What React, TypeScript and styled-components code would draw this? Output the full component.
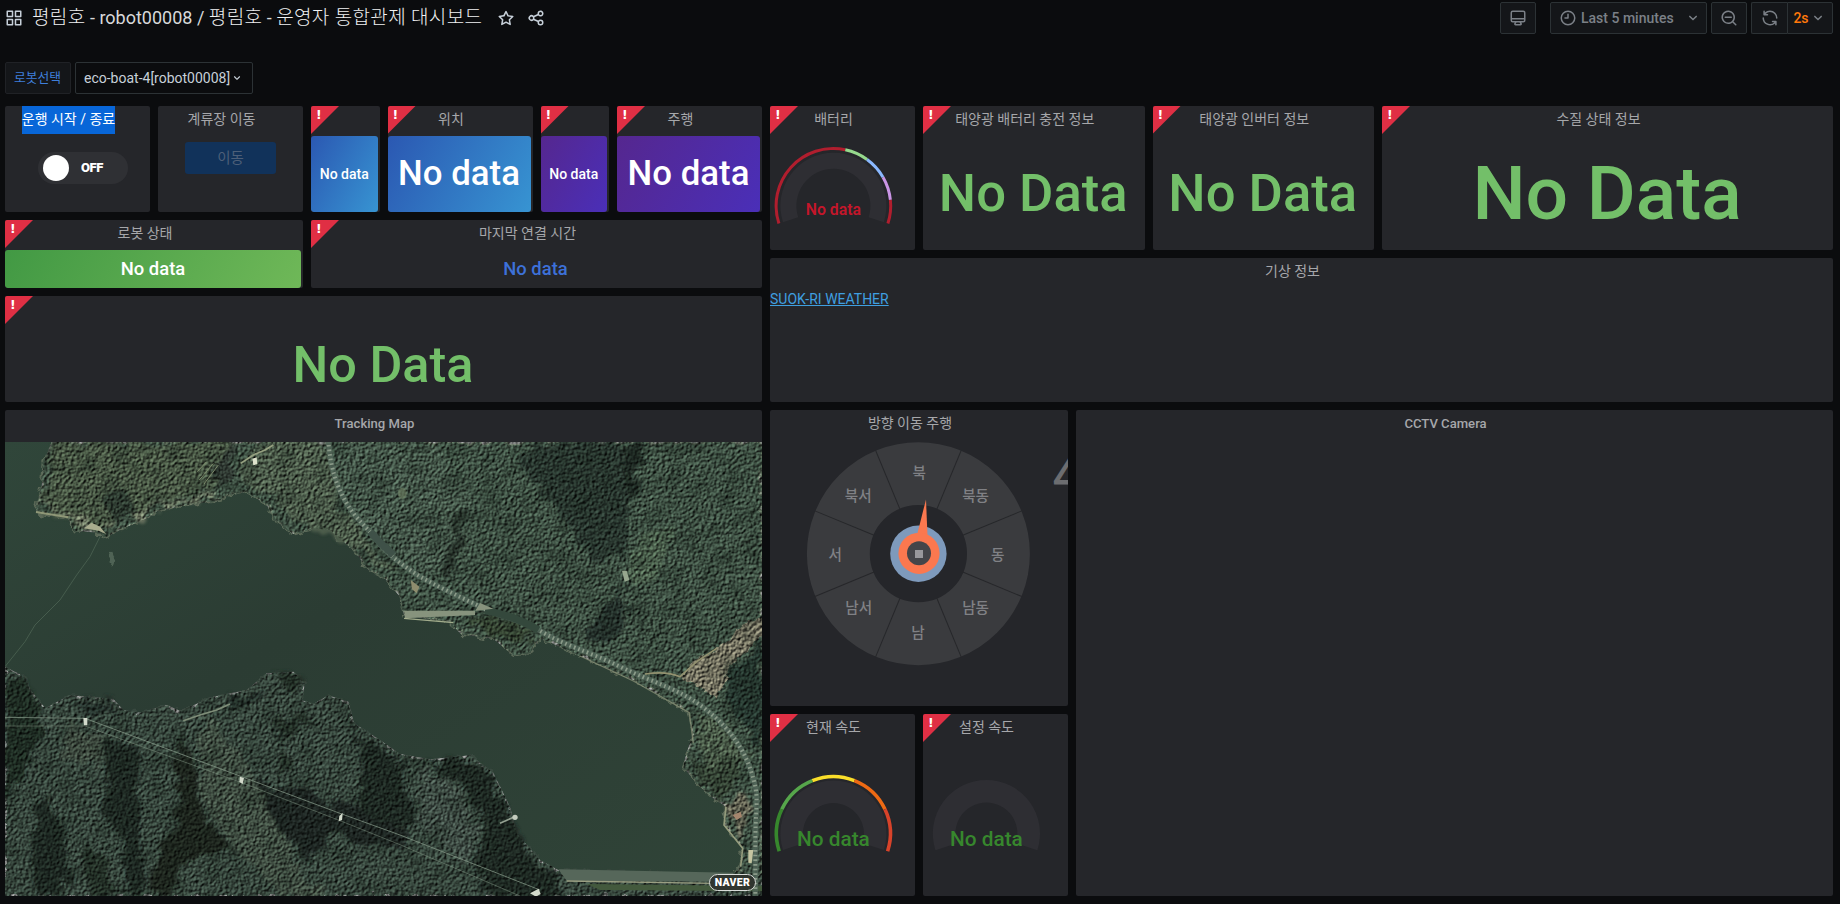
import React from "react";
import styled, { createGlobalStyle } from "styled-components";

const SANS = `Roboto, "Noto Sans CJK KR", sans-serif`;

const GlobalStyle = createGlobalStyle`
  *, *::before, *::after { box-sizing: border-box; }
  body { margin: 0; background: #0b0c0e; color: #c7d0d9; font-family: ${SANS}; font-size: 14px; overflow: hidden; }
`;

const Page = styled.div`
  width: 1840px;
  height: 904px;
  padding: 0 7px 0 5px;
  display: flex;
  flex-direction: column;
  background: #0b0c0e;
`;

const TopBar = styled.header`
  display: flex;
  align-items: center;
  justify-content: space-between;
  height: 36px;
  flex: none;
`;

const Heading = styled.div`
  display: flex;
  align-items: center;
  color: #c7d0d9;
`;

const Title = styled.h1`
  width: 452px;
  margin: 0 13px 0 9px;
  font-size: 18px;
  font-weight: 400;
  line-height: 34px;
  white-space: nowrap;
  color: #d8d9da;
`;

const Hangul = styled.span`
  font-size: 19px;
  font-weight: 300;
  letter-spacing: 0.35px;
  color: #f0f1f2;
`;

const TitleIcon = styled.span`
  display: flex;
  width: 18px;
  height: 18px;
  margin-right: 12px;
`;

const Tools = styled.div`
  display: flex;
  align-items: center;
  gap: 4px;
`;

const ToolButton = styled.button<{ $w: number; $gap?: number }>`
  display: flex;
  align-items: center;
  justify-content: center;
  width: ${(p) => p.$w}px;
  height: 32px;
  margin: 0 ${(p) => p.$gap ?? 0}px 0 0;
  padding: 0;
  border: 1px solid #2c3235;
  border-radius: 2px;
  background: #141619;
  color: #7b8087;
  font: 500 14px ${SANS};
`;

const RangeButton = styled(ToolButton)`
  justify-content: flex-start;
  padding: 0 4px 0 8px;
  gap: 4px;
  & > svg:last-child { margin-left: auto; }
`;

const RefreshGroup = styled.div`
  display: flex;
  & > button:first-child { border-right: 0; border-radius: 2px 0 0 2px; }
  & > button:last-child { border-radius: 0 2px 2px 0; }
`;

const IntervalLabel = styled.span`
  color: #ff780a;
`;

const Variables = styled.div`
  display: flex;
  gap: 4px;
  margin-top: 26px;
  height: 32px;
  flex: none;
`;

const VarLabel = styled.label`
  display: flex;
  align-items: center;
  justify-content: center;
  width: 66px;
  border: 1px solid #202226;
  border-radius: 2px;
  background: #141619;
  color: #3f7fdb;
  font-size: 12.8px;
  padding: 0 1px 3px 0;
`;

const VarSelect = styled.div`
  display: flex;
  align-items: center;
  width: 178px;
  padding: 0 8px;
  border: 1px solid #2c3235;
  border-radius: 2px;
  color: #c7d0d9;
  font-size: 14px;
  white-space: nowrap;
`;

const Grid = styled.main`
  display: grid;
  grid-template-columns: repeat(24, 1fr);
  grid-template-rows: repeat(21, 30px);
  gap: 8px;
  margin-top: 12px;
`;

const PanelBox = styled.section<{ $x: number; $y: number; $w: number; $h: number }>`
  position: relative;
  display: flex;
  flex-direction: column;
  min-width: 0;
  grid-column: ${(p) => p.$x} / span ${(p) => p.$w};
  grid-row: ${(p) => p.$y} / span ${(p) => p.$h};
  overflow: hidden;
  border-radius: 2px;
  background: #25262a;
`;

const PanelHeader = styled.header`
  display: flex;
  justify-content: center;
  flex: none;
  height: 28px;
  padding-right: 18px;
`;

const PanelTitle = styled.h2<{ $latin?: boolean; $selected?: boolean }>`
  margin: 0;
  height: 28px;
  line-height: ${(p) => (p.$latin ? 28 : 26)}px;
  font-size: ${(p) => (p.$latin ? 13.1 : 14)}px;
  font-weight: ${(p) => (p.$latin ? 500 : 400)};
  white-space: nowrap;
  color: ${(p) => (p.$selected ? "#ffffff" : "#a6a7aa")};
  background: ${(p) => (p.$selected ? "#0866d8" : "transparent")};
`;

const ErrorCorner = styled.div`
  position: absolute;
  top: 0;
  left: 0;
  width: 28px;
  height: 28px;
  padding-left: 5px;
  clip-path: polygon(0 0, 100% 0, 0 100%);
  background: #e02f44;
  color: #fff;
  font: 700 12.5px/18px "DejaVu Sans", sans-serif;
`;

const Body = styled.div<{ $pull?: number }>`
  display: flex;
  flex: 1;
  min-height: 0;
  align-items: center;
  justify-content: center;
  padding-bottom: ${(p) => p.$pull ?? 0}px;
`;

const Tile = styled.div<{ $bg: string; $size: number }>`
  display: flex;
  flex: 1;
  align-items: center;
  justify-content: center;
  margin: 2px 2px 0 0;
  padding-bottom: ${(p) => (p.$size > 30 ? 2 : 0)}px;
  border-radius: 3px;
  background: ${(p) => p.$bg};
  color: #fff;
  font-size: ${(p) => p.$size}px;
  font-weight: 500;
  line-height: 1;
  white-space: nowrap;
`;

const BlueValue = styled.span`
  color: #3d71d9;
  font-size: 18.4px;
  font-weight: 500;
  margin: 1px 2px 0 0;
`;

const BigValue = styled.span<{ $size: number; $drop: number }>`
  color: #73bf69;
  font-size: ${(p) => p.$size}px;
  font-weight: 500;
  line-height: 1;
  margin: ${(p) => p.$drop}px 1px 0 0;
  white-space: nowrap;
`;

const Switch = styled.div`
  display: flex;
  align-items: center;
  width: 90px;
  height: 32px;
  margin: 0 0 11px 11px;
  padding-left: 5px;
  border-radius: 16px;
  background: #2f3034;
  color: #fff;
  font: 900 13px ${SANS};
  letter-spacing: -0.4px;
`;

const Knob = styled.span`
  width: 26px;
  height: 26px;
  margin-right: 12px;
  border-radius: 50%;
  background: #fff;
`;

const MoveButton = styled.button`
  width: 91px;
  height: 32px;
  margin: 0;
  margin-bottom: 12px;
  padding: 0 0 4px;
  border: 0;
  border-radius: 3px;
  background: #11325a;
  color: #4d5f78;
  font: 400 14.5px ${SANS};
`;

const WeatherLink = styled.a`
  align-self: flex-start;
  margin-top: 3px;
  color: #3f9fe0;
  font-size: 14px;
  line-height: 20px;
  text-decoration: underline;
`;

const Drawing = styled.svg`
  display: block;
  flex: none;
  font-family: ${SANS};
`;

const MapFrame = styled.div`
  position: relative;
  flex: 1;
  margin-top: 4px;
`;

const Terrain = styled.g`
  isolation: isolate;
  filter: saturate(0.78);
`;

const OverlayTexture = styled.g`
  mix-blend-mode: overlay;
`;

const MapBadge = styled.span`
  position: absolute;
  right: 6px;
  bottom: 5px;
  width: 47px;
  height: 17px;
  border: 1px solid #d8dbd8;
  border-radius: 9px;
  background: #30352f;
  color: #fff;
  font: 900 10.5px/15px ${SANS};
  letter-spacing: 0.3px;
  text-align: center;
`;

const ICONS = {
  apps: "M10,13H3a1,1,0,0,0-1,1v7a1,1,0,0,0,1,1h7a1,1,0,0,0,1-1V14A1,1,0,0,0,10,13ZM9,20H4V15H9ZM21,2H14a1,1,0,0,0-1,1v7a1,1,0,0,0,1,1h7a1,1,0,0,0,1-1V3A1,1,0,0,0,21,2ZM20,9H15V4h5Zm1,4H14a1,1,0,0,0-1,1v7a1,1,0,0,0,1,1h7a1,1,0,0,0,1-1V14A1,1,0,0,0,21,13Zm-1,7H15V15h5ZM10,2H3A1,1,0,0,0,2,3v7a1,1,0,0,0,1,1h7a1,1,0,0,0,1-1V3A1,1,0,0,0,10,2ZM9,9H4V4H9Z",
  star: "M22,9.67A1,1,0,0,0,21.14,9l-5.69-.83L12.9,3a1,1,0,0,0-1.8,0L8.55,8.16,2.86,9a1,1,0,0,0-.81.68,1,1,0,0,0,.25,1l4.13,4-1,5.68A1,1,0,0,0,6.9,21.44L12,18.77l5.1,2.67a.93.93,0,0,0,.46.12,1,1,0,0,0,.59-.19,1,1,0,0,0,.4-1l-1-5.68,4.13-4A1,1,0,0,0,22,9.67Zm-6.15,4a1,1,0,0,0-.29.88l.72,4.2-3.76-2a1.06,1.06,0,0,0-.94,0l-3.76,2,.72-4.2a1,1,0,0,0-.29-.88l-3-3,4.21-.61a1,1,0,0,0,.76-.55L12,5.7l1.88,3.82a1,1,0,0,0,.76.55l4.21.61Z",
  share: "M18,14a4,4,0,0,0-3.08,1.48l-5.1-2.35a3.64,3.64,0,0,0,0-2.26l5.1-2.35A4,4,0,1,0,14,6a4.17,4.17,0,0,0,.07.71L8.79,9.14a4,4,0,1,0,0,5.72l5.28,2.43A4.17,4.17,0,0,0,14,18a4,4,0,1,0,4-4ZM18,4a2,2,0,1,1-2,2A2,2,0,0,1,18,4ZM6,14a2,2,0,1,1,2-2A2,2,0,0,1,6,14Zm12,6a2,2,0,1,1,2-2A2,2,0,0,1,18,20Z",
  monitor: "M19,2H5A3,3,0,0,0,2,5V15a3,3,0,0,0,3,3H7.64l-.58,1a2,2,0,0,0,0,2,2,2,0,0,0,1.75,1h6.46A2,2,0,0,0,17,21a2,2,0,0,0,0-2l-.59-1H19a3,3,0,0,0,3-3V5A3,3,0,0,0,19,2ZM8.77,20,10,18H14l1.2,2ZM20,15a1,1,0,0,1-1,1H5a1,1,0,0,1-1-1V14H20Zm0-3H4V5A1,1,0,0,1,5,4H19a1,1,0,0,1,1,1Z",
  clock: "M12,2A10,10,0,1,0,22,12,10,10,0,0,0,12,2Zm0,18a8,8,0,1,1,8-8A8,8,0,0,1,12,20ZM12,6a1,1,0,0,0-1,1v4H8a1,1,0,0,0,0,2h4a1,1,0,0,0,1-1V7A1,1,0,0,0,12,6Z",
  zoomOut: "M21.71,20.29,18,16.61A9,9,0,1,0,16.61,18l3.68,3.68a1,1,0,0,0,1.42,0A1,1,0,0,0,21.71,20.29ZM11,18a7,7,0,1,1,7-7A7,7,0,0,1,11,18Zm4-8H7a1,1,0,0,0,0,2h8a1,1,0,0,0,0-2Z",
  sync: "M19.91,15.51H15.38a1,1,0,0,0,0,2h2.4A8,8,0,0,1,4,12a1,1,0,1,0-2,0,10,10,0,0,0,16.88,7.23V21a1,1,0,0,0,2,0V16.5A1,1,0,0,0,19.91,15.51ZM12,2A10,10,0,0,0,5.12,4.77V3a1,1,0,0,0-2,0V7.5a1,1,0,0,0,1,1h4.5a1,1,0,0,0,0-2H6.22A8,8,0,0,1,20,12a1,1,0,0,0,2,0A10,10,0,0,0,12,2Z",
  down: "M17,9.17a1,1,0,0,0-1.41,0L12,12.71,8.46,9.17a1,1,0,0,0-1.41,0,1,1,0,0,0,0,1.42l4.24,4.24a1,1,0,0,0,1.42,0L17,10.59A1,1,0,0,0,17,9.17Z",
};

function Icon({ name, size = 18 }: { name: keyof typeof ICONS; size?: number }) {
  return (
    <Drawing width={size} height={size} viewBox="0 0 24 24" fill="currentColor" aria-hidden>
      <path d={ICONS[name]} />
    </Drawing>
  );
}

interface PanelProps {
  at: [number, number, number, number];
  title?: string;
  latin?: boolean;
  selected?: boolean;
  error?: boolean;
  children?: React.ReactNode;
}

function Panel({ at: [x, y, w, h], title, latin, selected, error, children }: PanelProps) {
  return (
    <PanelBox $x={x} $y={y} $w={w} $h={h}>
      <PanelHeader>
        {title && <PanelTitle $latin={latin} $selected={selected}>{title}</PanelTitle>}
      </PanelHeader>
      {error && <ErrorCorner>!</ErrorCorner>}
      {children}
    </PanelBox>
  );
}

// Angles are degrees clockwise from twelve o'clock.
function ring(cx: number, cy: number, inner: number, outer: number, from: number, to: number) {
  const at = (r: number, deg: number) => {
    const a = (deg * Math.PI) / 180;
    return `${(cx + r * Math.sin(a)).toFixed(2)} ${(cy - r * Math.cos(a)).toFixed(2)}`;
  };
  const large = to - from > 180 ? 1 : 0;
  return `M${at(outer, from)}A${outer} ${outer} 0 ${large} 1 ${at(outer, to)}L${at(inner, to)}A${inner} ${inner} 0 ${large} 0 ${at(inner, from)}Z`;
}

interface GaugeProps {
  cx: number;
  cy: number;
  inner: number;
  outer: number;
  height: number;
  bands?: [number, number, string][];
  band?: number;
  color: string;
  size: number;
  weight?: number;
  textY: number;
}

function Gauge({ cx, cy, inner, outer, height, bands = [], band = 3, color, size, weight = 500, textY }: GaugeProps) {
  return (
    <Drawing width={145} height={height} viewBox={`0 0 145 ${height}`}>
      <path d={ring(cx, cy, inner, outer, -108, 108)} fill="#2e2e33" />
      {bands.map(([from, to, fill]) => (
        <path key={from} d={ring(cx, cy, 58.8 - band, 58.8, from, to)} fill={fill} />
      ))}
      <text x={cx} y={textY} fill={color} fontSize={size} fontWeight={weight} textAnchor="middle">No data</text>
    </Drawing>
  );
}

const DIRECTIONS: [string, number, number][] = [
  ["북", 149.3, 40], ["북동", 205.6, 63], ["동", 227.7, 121.5], ["남동", 205.6, 175],
  ["남", 148, 200], ["남서", 88.7, 175], ["서", 65.3, 121.5], ["북서", 88.3, 63],
];

function Compass() {
  const spokes = [22.5, 67.5, 112.5, 157.5, 202.5, 247.5, 292.5, 337.5];
  return (
    <Drawing width={298} height={268} viewBox="0 0 298 268">
      <circle cx={148.4} cy={115.7} r={80.05} fill="none" stroke="#3a3b3e" strokeWidth={62.9} />
      {spokes.map((deg) => (
        <line key={deg} x1={148.4} y1={115.7 - 48} x2={148.4} y2={115.7 - 112} stroke="#26272a" strokeWidth={1} transform={`rotate(${deg} 148.4 115.7)`} />
      ))}
      {DIRECTIONS.map(([label, x, y]) => (
        <text key={label} x={x} y={y} fill="#808185" fontSize={14.6} fontWeight={500} textAnchor="middle">{label}</text>
      ))}
      <circle cx={148.4} cy={115.7} r={28.2} fill="#7e9abc" />
      <path d="M156 61.5L157.5 98L146.5 99Z" fill="#fb784f" />
      <circle cx={149} cy={115.3} r={20.6} fill="#fb784f" />
      <circle cx={149} cy={115.3} r={12} fill="#444549" />
      <rect x={145} y={112} width={8} height={8} fill="#98989c" />
      <text x={282.6} y={54} fill="#6c6d70" fontSize={48} fontWeight={500}>4</text>
    </Drawing>
  );
}

const NORTH_SHORE =
  "M155 126L130 190L125 260L108 338L205 354L220 392L300 398L320 410L370 385L430 360L475 332L560 315L660 300L690 283L740 275L800 315L832 365L880 402L940 385L990 390L1060 450L1108 512L1150 528L1170 555L1200 590L1212 645L1350 665L1382 702L1480 716L1540 766L1590 755L1622 715L1740 768L1900 840L2065 935L2078 1000L2048 1100L2100 1160L2140 1195L2178 1220L2172 1275L2228 1345L2220 1400L2200 1425L2286 1440V126Z";
const SOUTH_SHORE =
  "M15 800L75 830L92 870L136 925L210 885L340 897L370 930L420 938L500 915L540 932L640 890L740 870L800 820L880 815L915 850L905 900L940 912L985 886L1045 905L1062 970L1140 1020L1200 1062L1290 1078L1410 1066L1480 1118L1530 1220L1550 1300L1620 1380L1675 1410L2286 1425V1488H15Z";
const ROAD =
  "M985 120C990 200 1010 260 1040 310S1100 380 1130 420S1200 490 1245 520S1370 585 1440 620S1560 655 1625 695S1760 752 1860 800S2030 865 2100 915S2225 1030 2252 1110S2268 1200 2266 1310V1500";

function SatelliteMap() {
  return (
    <Drawing width="100%" height="100%" viewBox="15 126 2271 1362" preserveAspectRatio="none">
      <defs>
        <clipPath id="frame"><rect x="15" y="126" width="2271" height="1362" /></clipPath>
        <clipPath id="land"><path d={NORTH_SHORE} /><path d={SOUTH_SHORE} /></clipPath>
        <filter id="canopy" x="0" y="0" width="100%" height="100%" colorInterpolationFilters="sRGB">
          <feTurbulence type="fractalNoise" baseFrequency="0.11" numOctaves="4" seed="8" result="n" />
          <feDiffuseLighting in="n" surfaceScale="4.6" diffuseConstant="0.93" lightingColor="#fff">
            <feDistantLight azimuth="225" elevation="32" />
          </feDiffuseLighting>
        </filter>
        <filter id="patches" x="0" y="0" width="100%" height="100%" colorInterpolationFilters="sRGB">
          <feTurbulence type="fractalNoise" baseFrequency="0.018" numOctaves="4" seed="21" />
          <feColorMatrix values="0 0 0 0 0.1  0 0 0 0 0.16  0 0 0 0 0.12  3 0 0 0 -1.35" />
        </filter>
        <filter id="rough" x="-5%" y="-5%" width="110%" height="110%">
          <feTurbulence type="fractalNoise" baseFrequency="0.035" numOctaves="3" seed="4" />
          <feDisplacementMap in="SourceGraphic" scale="34" xChannelSelector="R" yChannelSelector="G" />
        </filter>
        <filter id="shade" x="-10%" y="-10%" width="120%" height="120%">
          <feTurbulence type="fractalNoise" baseFrequency="0.02" numOctaves="3" seed="9" />
          <feDisplacementMap in="SourceGraphic" scale="80" xChannelSelector="R" yChannelSelector="G" />
          <feGaussianBlur stdDeviation="5" />
        </filter>
        <linearGradient id="water" x1="0" y1="0" x2="1" y2="1">
          <stop offset="0" stopColor="#30463a" />
          <stop offset="0.4" stopColor="#2b3c33" />
          <stop offset="1" stopColor="#304438" />
        </linearGradient>
      </defs>
      <g clipPath="url(#frame)">
        <rect x="15" y="126" width="2271" height="1362" fill="url(#water)" />
        <path d="M300 410L270 470L230 525L180 600L105 675L75 725L15 800" fill="none" stroke="#465c4d" strokeWidth="3" />
        <g filter="url(#rough)"><path d="M328 462l8 -4 5 14 6 6 -8 22 -10 -12z" fill="#506455" /></g>
        <Terrain>
          <g filter="url(#rough)">
            <path d={NORTH_SHORE} fill="#3b5243" stroke="#5a6b54" strokeWidth="4" />
            <path d={SOUTH_SHORE} fill="#35483c" />
          </g>
          <g filter="url(#shade)">
            <path d="M165 126L690 126L680 250L480 310L330 380L220 370L130 325Z" fill="#455841" />
            <path d="M800 126L975 126L1020 300L1110 420L1190 510L1160 510L1060 430L890 375L810 290L710 250L730 180Z" fill="#4a5d46" />
            <path d="M1000 126L1300 126L1420 300L1370 480L1290 520L1160 430L1050 300Z" fill="#405846" />
            <path d="M130 325L210 338L300 378L420 335L640 285" fill="none" stroke="#67735a" strokeWidth="14" />
            <path d="M310 300L370 270L410 320L370 370L320 360Z" fill="#2c3b2f" />
            <path d="M690 190L720 140L690 126L640 200L670 270L690 260Z" fill="#2d3b30" />
            <path d="M1380 330L1410 330L1380 430L1350 540L1320 520L1350 420Z" fill="#25362a" />
            <path d="M1540 160L1700 126L1860 126L1900 220L1880 370L1870 480L1780 470L1700 380L1620 260Z" fill="#28392f" />
            <path d="M1870 126L1930 126L1910 250L1880 290L1865 220Z" fill="#1e2b24" />
            <path d="M1940 390L2020 370L2000 480L1930 570L1880 540L1885 480Z" fill="#455e47" />
            <path d="M1872 565L1880 640L1860 725L1760 718L1765 690L1830 610Z" fill="#22312a" />
            <path d="M1390 660L1480 650L1600 690L1580 735L1540 745L1480 700Z" fill="#30442f" />
            <path d="M2190 800L2286 720V1040L2230 960L2160 900Z" fill="#24382d" />
            <path d="M2090 930L2200 995L2240 1060L2150 1130L2100 1070Z" fill="#485e46" />
            <path d="M2060 1060L2120 1110L2230 1060L2180 1200L2100 1150Z" fill="#324431" />
            <path d="M2190 1210L2240 1190L2240 1320L2200 1280Z" fill="#636450" />
            <path d="M15 830L80 850L125 920L130 1000L60 1120L15 1220Z" fill="#1f2d24" />
            <path d="M210 900L340 907L360 940L240 930Z" fill="#23332a" />
            <path d="M330 1010L410 1040L430 1200L430 1480L380 1488L370 1350L310 1200Z" fill="#1c2920" />
            <path d="M140 1180L200 1300L200 1488L110 1488L90 1300Z" fill="#1e2c22" />
            <path d="M250 1330L330 1380L330 1488L270 1488Z" fill="#233127" />
            <path d="M545 970L570 1080L590 1200L650 1290L710 1360L600 1370L530 1400L510 1488L440 1488L490 1330L540 1210L530 1090Z" fill="#1b271f" />
            <path d="M670 890L760 875L790 900L740 930Z" fill="#23312a" />
            <path d="M830 825L890 830L905 855L890 890L860 870Z" fill="#203028" />
            <path d="M840 960L900 920L940 960L830 1010L880 1110L840 1140Z" fill="#213027" />
            <path d="M740 1145L900 1160L1080 1230L1200 1260L1240 1330L1180 1340L1000 1300L930 1390L820 1270Z" fill="#1b2820" />
            <path d="M1030 920L1050 990L1200 1080L1225 1180L1240 1280L1130 1270L1060 1200L1100 1080Z" fill="#1e2b23" />
            <path d="M1290 1090L1400 1080L1465 1125L1515 1220L1590 1370L1660 1420L1700 1488L1440 1488L1430 1380L1460 1270L1370 1140Z" fill="#1d2b23" />
            <path d="M600 950L680 1010L760 1120L820 1250L900 1400L960 1488L850 1488L700 1330L600 1180Z" fill="#3d5040" />
            <path d="M1260 1110L1340 1130L1430 1280L1400 1380L1250 1280Z" fill="#3e4f44" />
            <path d="M200 970L330 1010L300 1100L180 1080Z" fill="#3a4c3d" />
          </g>
          <g filter="url(#rough)">
            <path d="M2300 652L2240 665L2190 715L2125 760L2070 790L2050 830L2155 900L2185 800L2300 690Z" fill="#75725b" />
          </g>
          <g clipPath="url(#land)">
            <rect x="15" y="126" width="2271" height="1362" filter="url(#patches)" opacity="0.4" />
          </g>
          <OverlayTexture clipPath="url(#land)" opacity="0.9">
            <rect x="15" y="126" width="2271" height="1362" filter="url(#canopy)" />
          </OverlayTexture>
        </Terrain>

        <path d="M1675 1408L2200 1418V1445L1700 1442Z" fill="#56675a" />
        <path d="M1700 1443L2140 1450" stroke="#9a9e82" strokeWidth="4" />
        <path d="M1760 1452L2286 1458V1474L1800 1470Z" fill="#43593d" />
        <path d={ROAD} fill="none" stroke="#52665a" strokeWidth="17" opacity="0.8" />
        <path d={ROAD} fill="none" stroke="#a5b3a0" strokeWidth="12" strokeDasharray="5 9" opacity="0.7" />
        <path d="M1110 395Q1140 430 1180 465" fill="none" stroke="#3f5148" strokeWidth="22" />
        <path d="M1455 632Q1540 645 1615 690" fill="none" stroke="#34483c" strokeWidth="22" />
        <path d="M1740 768L1900 843L2068 938L2080 1030" fill="none" stroke="#8d9479" strokeWidth="4" opacity="0.7" />
        <path d="M1935 822Q2000 812 2040 830L2090 785L2150 745" fill="none" stroke="#92916f" strokeWidth="5" />
        <path d="M1212 632L1430 632L1480 626L1440 609L1425 634L1425 645L1215 655Z" fill="#87937d" />
        <path d="M1212 655L1290 662L1360 668" fill="none" stroke="#a2ac8c" strokeWidth="4" />
        <path d="M1232 540L1258 560L1250 580L1236 568Z" fill="#8e8d6e" />
        <path d="M2178 1220L2172 1275L2228 1345L2222 1400" fill="none" stroke="#949b7c" strokeWidth="5" />
        <path d="M2245 1350L2260 1350L2255 1390L2245 1388Z" fill="#c5c5a1" />
        <path d="M2198 1245L2222 1235L2226 1250L2210 1260Z" fill="#a5856d" />
        <path d="M108 336L205 352" stroke="#8f9777" strokeWidth="6" />
        <path d="M252 385L275 368L300 380L318 402L296 392Z" fill="#a9ac8e" />
        <path d="M722 190L760 165L795 150L820 135" fill="none" stroke="#96a080" strokeWidth="5" />
        <path d="M757 176L770 172L772 192L760 196Z" fill="#dfe3cd" />
        <path d="M592 215L620 185M598 240L640 190M612 252L655 195" fill="none" stroke="#7c8a6b" strokeWidth="3" />
        <path d="M550 962L600 945L650 930L690 912" fill="none" stroke="#7f8d78" strokeWidth="5" />
        <path d="M1866 512L1880 512L1888 540L1874 545Z" fill="#97a78f" />
        <ellipse cx="1207" cy="280" rx="13" ry="17" fill="#70806082" />
        <g fill="none" stroke="#7e9080" strokeWidth="3" opacity="0.8">
          <path d="M15 952L255 955L725 1130L1020 1240L1200 1305L1620 1470" />
          <path d="M15 978L255 978L725 1148L1020 1262L1200 1334L1560 1488" opacity="0.65" />
        </g>
        <g fill="#d3dacb">
          <path d="M250 954h12v22h-10z" />
          <path d="M720 1130l12 4 -4 18 -10 -6z" />
          <path d="M1018 1248l10 -10 -2 22 -10 4z" />
          <path d="M1590 1480l26 -14 6 16 -14 8z" />
        </g>
        <path d="M1500 1270L1540 1252" stroke="#94a091" strokeWidth="5" />
        <circle cx="1545" cy="1252" r="8" fill="#c3cbbd" />
      </g>
    </Drawing>
  );
}

const BLUE = "linear-gradient(120deg, #2b58b2, #3794d2)";
const PURPLE = "linear-gradient(120deg, #55278f, #4a2fb8)";
const GREEN = "linear-gradient(120deg, #429944, #6fb858)";

export default function App() {
  return (
    <Page>
      <GlobalStyle />
      <TopBar>
        <Heading>
          <Icon name="apps" />
          <Title>
            <Hangul>평림호</Hangul> - robot00008 / <Hangul>평림호</Hangul> - <Hangul>운영자 통합관제 대시보드</Hangul>
          </Title>
          <TitleIcon><Icon name="star" /></TitleIcon>
          <TitleIcon><Icon name="share" /></TitleIcon>
        </Heading>
        <Tools>
          <ToolButton $w={36} $gap={10}><Icon name="monitor" /></ToolButton>
          <RangeButton $w={157}><Icon name="clock" />Last 5 minutes<Icon name="down" /></RangeButton>
          <ToolButton $w={36}><Icon name="zoomOut" /></ToolButton>
          <RefreshGroup>
            <ToolButton $w={36}><Icon name="sync" /></ToolButton>
            <ToolButton $w={46}><IntervalLabel>2s</IntervalLabel><Icon name="down" /></ToolButton>
          </RefreshGroup>
        </Tools>
      </TopBar>

      <Variables>
        <VarLabel>로봇선택</VarLabel>
        <VarSelect>eco-boat-4[robot00008]<Icon name="down" size={14} /></VarSelect>
      </Variables>

      <Grid>
        <Panel at={[1, 1, 2, 3]} title="운행 시작 / 종료" selected>
          <Body><Switch><Knob />OFF</Switch></Body>
        </Panel>
        <Panel at={[3, 1, 2, 3]} title="계류장 이동">
          <Body $pull={18}><MoveButton>이동</MoveButton></Body>
        </Panel>
        <Panel at={[5, 1, 1, 3]} error><Tile $bg={BLUE} $size={14}>No data</Tile></Panel>
        <Panel at={[6, 1, 2, 3]} title="위치" error><Tile $bg={BLUE} $size={34.8}>No data</Tile></Panel>
        <Panel at={[8, 1, 1, 3]} error><Tile $bg={PURPLE} $size={14}>No data</Tile></Panel>
        <Panel at={[9, 1, 2, 3]} title="주행" error><Tile $bg={PURPLE} $size={34.8}>No data</Tile></Panel>

        <Panel at={[1, 4, 4, 2]} title="로봇 상태" error><Tile $bg={GREEN} $size={18.4}>No data</Tile></Panel>
        <Panel at={[5, 4, 6, 2]} title="마지막 연결 시간" error>
          <Body><BlueValue>No data</BlueValue></Body>
        </Panel>
        <Panel at={[1, 6, 10, 3]} error>
          <Body><BigValue $size={50.4} $drop={5}>No Data</BigValue></Body>
        </Panel>

        <Panel at={[11, 1, 2, 4]} title="배터리" error>
          <Gauge
            cx={63.4} cy={71.8} inner={37} outer={53} height={116} color="#c4162a" size={15.8} weight={600} textY={81}
            bands={[[-108, 12, "#b01e2e"], [12, 36, "#96d98d"], [36, 60, "#8ab8ff"], [60, 84, "#ca95e5"], [84, 108, "#b01e2e"]]}
          />
        </Panel>
        <Panel at={[13, 1, 3, 4]} title="태양광 배터리 충전 정보" error>
          <Body><BigValue $size={52.6} $drop={2}>No Data</BigValue></Body>
        </Panel>
        <Panel at={[16, 1, 3, 4]} title="태양광 인버터 정보" error>
          <Body><BigValue $size={52.6} $drop={2}>No Data</BigValue></Body>
        </Panel>
        <Panel at={[19, 1, 6, 4]} title="수질 상태 정보" error>
          <Body><BigValue $size={75} $drop={2}>No Data</BigValue></Body>
        </Panel>
        <Panel at={[11, 5, 14, 4]} title="기상 정보">
          <WeatherLink>SUOK-RI WEATHER</WeatherLink>
        </Panel>

        <Panel at={[1, 9, 10, 13]} title="Tracking Map" latin>
          <MapFrame>
            <SatelliteMap />
            <MapBadge>NAVER</MapBadge>
          </MapFrame>
        </Panel>
        <Panel at={[11, 9, 4, 8]} title="방향 이동 주행"><Compass /></Panel>
        <Panel at={[15, 9, 10, 13]} title="CCTV Camera" latin />
        <Panel at={[11, 17, 2, 5]} title="현재 속도" error>
          <Gauge
            cx={63.4} cy={91.6} inner={30.5} outer={53} band={3.6} height={154} color="#37872d" size={20.8} textY={104}
            bands={[[-108, -64.8, "#37872d"], [-64.8, -21.6, "#56a64b"], [-21.6, 21.6, "#fade2a"], [21.6, 64.8, "#ee6a14"], [64.8, 108, "#d8432a"]]}
          />
        </Panel>
        <Panel at={[13, 17, 2, 5]} title="설정 속도" error>
          <Gauge cx={63.4} cy={91.6} inner={31} outer={53.6} height={154} color="#37872d" size={20.8} textY={104} />
        </Panel>
      </Grid>
    </Page>
  );
}
